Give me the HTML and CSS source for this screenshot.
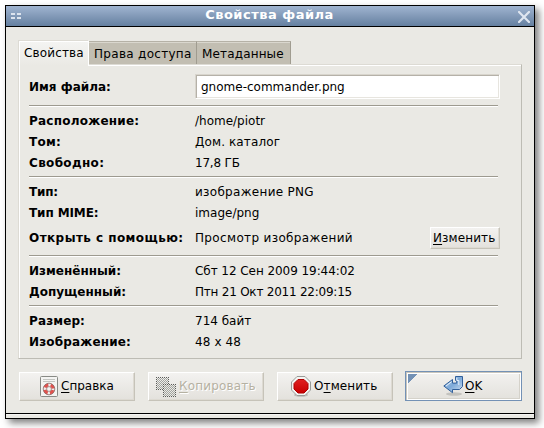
FILE: index.html
```html
<!DOCTYPE html>
<html lang="ru">
<head>
<meta charset="utf-8">
<title>Свойства файла</title>
<link rel="stylesheet" href="styles.css">
</head>
<body>
<main class="window">
  <header class="titlebar">
    <svg class="grip" width="10" height="6" viewBox="0 0 10 6" shape-rendering="crispEdges"><path fill="#dde4ee" d="M0 0h4v2H0zM6 0h4v2H6zM0 4h4v2H0zM6 4h4v2H6z"/></svg>
    <h1 class="title">Свойства файла</h1>
    <svg class="close" width="12" height="12" viewBox="0 0 12 12"><path d="M1 1l10 10M11 1L1 11" stroke="#dfe6f0" stroke-width="2.2" stroke-linecap="square"/></svg>
  </header>
  <section class="body">
    <nav class="tabs">
      <span class="tab active t-props">Свойства</span><span class="tab second t-perm">Права доступа</span><span class="tab t-meta">Метаданные</span>
    </nav>
    <div class="pane">
      <div class="row name-row"><b class="l-name">Имя файла:</b><span class="input">gnome-commander.png</span></div>
      <hr>
      <div class="row"><b class="l-loc">Расположение:</b><span class="v-loc">/home/piotr</span></div>
      <div class="row"><b class="l-vol">Том:</b><span class="v-vol">Дом. каталог</span></div>
      <div class="row"><b class="l-free">Свободно:</b><span class="v-free">17,8 ГБ</span></div>
      <hr>
      <div class="row"><b class="l-type">Тип:</b><span class="v-type">изображение PNG</span></div>
      <div class="row"><b class="l-mime">Тип MIME:</b><span class="v-mime">image/png</span></div>
      <div class="row open-row"><b class="l-open">Открыть с помощью:</b><span class="v-open">Просмотр изображений</span><button class="button change"><span><u>И</u>зменить</span></button></div>
      <hr>
      <div class="row"><b class="l-mod">Изменённый:</b><span class="v-mod">Сбт 12 Сен 2009 19:44:02</span></div>
      <div class="row"><b class="l-acc">Допущенный:</b><span class="v-acc">Птн 21 Окт 2011 22:09:15</span></div>
      <hr>
      <div class="row"><b class="l-size">Размер:</b><span class="v-size">714 байт</span></div>
      <div class="row"><b class="l-img">Изображение:</b><span class="v-img">48 x 48</span></div>
    </div>
    <footer class="actions">
      <button class="button help">
        <svg width="20" height="22" viewBox="0 0 20 22"><rect x="1.5" y=".5" width="17" height="20" rx="1" fill="#f4f4f2" stroke="#888a85"/><path d="M4 3.5h12M4 5.5h12" stroke="#c4c6c2"/><circle cx="10" cy="13" r="4.2" fill="none" stroke="#eeeeec" stroke-width="4"/><circle cx="10" cy="13" r="4.2" fill="none" stroke="#e0524e" stroke-width="3.2" stroke-dasharray="4.2 2.4" stroke-dashoffset="-1.2"/><circle cx="10" cy="13" r="5.8" fill="none" stroke="#8d6764" stroke-width=".8"/><circle cx="10" cy="13" r="2.4" fill="#f4f4f2" stroke="#8d6764" stroke-width=".7"/></svg>
        <span class="b-help"><u>С</u>правка</span>
      </button>
      <button class="button copy" disabled>
        <svg width="20" height="20" viewBox="0 0 20 20" shape-rendering="crispEdges"><defs><pattern id="stipple" width="2" height="2" patternUnits="userSpaceOnUse"><path fill="#a2a4a0" d="M0 0h1v1H0zM1 1h1v1H1z"/></pattern><pattern id="dark" width="2" height="2" patternUnits="userSpaceOnUse"><path fill="#5a5b59" d="M0 0h1v1H0zM1 1h1v1H1z"/></pattern></defs><path fill="url(#stipple)" d="M1 1h11v11H1z"/><path fill="url(#dark)" d="M0 0h13v13H0zM1 1v11h11V1z" fill-rule="evenodd"/><path fill="#eae9e4" d="M7 7h13v13H7z"/><path fill="url(#stipple)" d="M8 8h11v11H8z"/><path fill="url(#dark)" d="M7 7h13v13H7zM8 8v11h11V8z" fill-rule="evenodd"/></svg>
        <span class="b-copy"><u>К</u>опировать</span>
      </button>
      <button class="button cancel">
        <svg width="20" height="21" viewBox="0 0 20 21"><defs><linearGradient id="red" x2="0" y2="1"><stop stop-color="#e02020"/><stop offset="1" stop-color="#c80000"/></linearGradient></defs><ellipse cx="10" cy="19" rx="7" ry="1.8" fill="#000" opacity=".18"/><path d="M6 .5h8L19.5 6v8L14 19.5H6L.5 14V6z" fill="#f4f4f2" stroke="#9a9c98"/><path d="M7 3.5h6L17 7.5v5.5l-4 4H7l-4-4V7.5z" fill="url(#red)" stroke="#b00000"/></svg>
        <span class="b-cancel">О<u>т</u>менить</span>
      </button>
      <button class="button ok">
        <svg width="20" height="20" viewBox="0 0 20 20"><defs><linearGradient id="blue" x2="1" y2="1"><stop stop-color="#b9d2ec"/><stop offset=".5" stop-color="#7da9d8"/><stop offset="1" stop-color="#d0e0f2"/></linearGradient></defs><ellipse cx="11" cy="18" rx="8" ry="1.7" fill="#000" opacity=".15"/><path d="M12.5 .5h7v10l-3 3H9.5v3.2L.8 10l8.7-6.5v3.6h4.2V4.5h-1.2z" fill="url(#blue)" stroke="#315f9a" stroke-linejoin="round"/><path d="M13.8 1.8v2.7h2V9M3 10l5.5-4.2" fill="none" stroke="#e8f1fa"/></svg>
        <span class="b-ok"><u>O</u>K</span>
      </button>
    </footer>
  </section>
  <div class="resize"></div>
</main>
</body>
</html>
```
FILE: styles.css
```css
* { box-sizing: border-box; }
body { margin: 0; padding: 5px 0 0 5px; height: 428px; background: #fff; font: 12px/15px "DejaVu Sans", sans-serif; color: #000; }
.window { width: 530px; height: 414px; border: 1px solid #000; background: #eae9e4; display: flex; flex-direction: column; box-shadow: 4px 4px 7px rgba(0,0,0,.5); }
.titlebar { height: 21px; flex: none; border-bottom: 1px solid #000; background: linear-gradient(#a0b4d0, #6580a0); display: flex; align-items: center; justify-content: space-between; padding: 0 4px 0 5px; }
.title { margin: 0; padding-bottom: 2px; font-size: 13px; line-height: 18px; color: #fff; letter-spacing: .5px; }
.close { margin-top: 1px; }
.body { flex: 1; padding: 13px 12px 0 12px; }
.tabs { display: flex; align-items: flex-end; height: 24px; }
.tab { height: 23px; padding: 5px 0 0 5px; background: #c2beb2; border-top: 1px solid #b5b1a6; box-shadow: inset 0 1px #dad7ce; border-right: 1px solid #a09c90; white-space: nowrap; width: 94px; }
.tab.second { width: 108px; }
.tab.active { width: 71px; height: 26px; margin-bottom: -2px; background: linear-gradient(#f4f4f2, #eae9e4); border: 1px solid #dddbd4; border-right-color: #fff; border-bottom: 0; box-shadow: inset 1px 1px #fff; position: relative; }
.pane { height: 295px; border: 1px solid #dddbd4; border-right-color: #bdbcb4; border-bottom-color: #bdbcb4; box-shadow: inset 1px 1px #fff; padding: 9px 22px 0 10px; width: 504px; }
.row { display: grid; grid-template-columns: 166px 1fr auto; align-items: center; height: 21px; white-space: nowrap; }
.row > b, .row > span:not(.input) { padding-top: 2px; }
.name-row { height: 25px; margin-bottom: 6px; }
.open-row { height: 29px; }
.row b { font-weight: bold; }
.input { height: 25px; width: 305px; background: #fff; border: 1px solid #d8d5cd; border-right-color: #fff; border-bottom-color: #fff; box-shadow: inset 1px 1px #b5b1a8, inset -1px -1px #e7e5df; padding: 5px 0 0 5px; }
hr { border: 0; border-top: 1px solid #9d9a8f; border-bottom: 1px solid #fff; height: 2px; margin: 3px 0; width: 469px; }
.name-row + hr { margin-top: 0; }
.button { font: inherit; color: inherit; margin: 0; padding: 0; border: 1px solid #fff; border-right-color: #c6c3b9; border-bottom-color: #c6c3b9; background: linear-gradient(#f3f2f0, #e3e1dc); box-shadow: inset -1px -1px #dddad2; display: flex; align-items: center; white-space: nowrap; }
u { text-decoration: underline; text-underline-offset: 2px; text-decoration-thickness: 1px; text-decoration-skip-ink: none; }
.change { width: 70px; height: 22px; padding: 1px 0 0 2px; margin-right: -1px; letter-spacing: .1px; }
.actions { display: flex; gap: 13px; align-items: flex-end; height: 30px; margin: 12px 0 0 1px; }
.actions .button { width: 116px; height: 29px; gap: 3px; flex: none; }
.actions .help { padding-left: 19px; gap: 2px; }
.actions .copy { padding-left: 7px; color: #b5b1a2; text-shadow: 1px 1px #fff; }
.actions .cancel { padding-left: 13px; }
.actions .ok { margin-left: -1px; width: 117px; height: 30px; padding-left: 37px; gap: 2px; border: 1px solid #7391b5; box-shadow: inset 1px 1px #c9c5bb, inset 2px 2px #fff, inset -1px -1px #fff, inset -2px -2px #d5d2ca; background: linear-gradient(135deg, #7391b5 6.5px, transparent 7px) 2px 2px / 12px 12px no-repeat, linear-gradient(#f3f2f0, #e3e1dc); }
.resize { height: 5px; border-top: 1px solid #000; box-shadow: inset 0 1px #f4f4f2; flex: none; }

/* Per-string tracking */
.t-props, .t-meta { letter-spacing: .15px; }
.t-perm { letter-spacing: .3px; }
.l-loc { letter-spacing: .24px; }
.l-vol { letter-spacing: .25px; }
.l-free { letter-spacing: .33px; }
.l-type { letter-spacing: -.2px; }
.l-mime { letter-spacing: -.1px; }
.l-open { letter-spacing: .44px; }
.l-size { letter-spacing: .12px; }
.l-img { letter-spacing: .17px; }
.v-vol { letter-spacing: .12px; }
.v-free { letter-spacing: -.2px; }
.v-type { letter-spacing: .3px; }
.v-open { letter-spacing: .35px; }
.v-mod { letter-spacing: -.06px; }
.v-acc { letter-spacing: -.23px; }
.v-img, .b-cancel { letter-spacing: .1px; }
.b-copy { letter-spacing: .18px; }
```
